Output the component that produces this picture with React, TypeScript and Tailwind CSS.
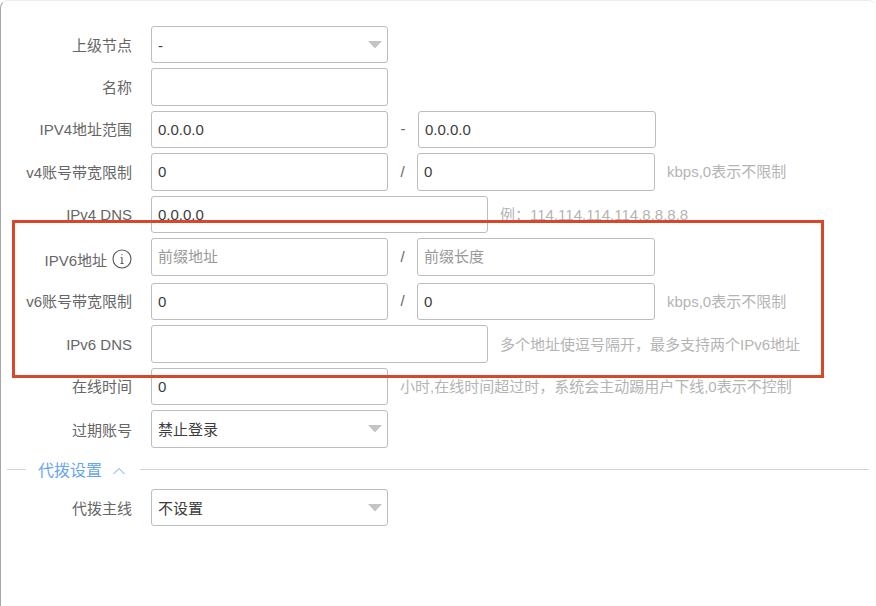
const font = "font-['Liberation_Sans','Noto_Sans_CJK_SC',sans-serif]";

function Caret() {
  return (
    <svg width="14" height="8" viewBox="0 0 14 8" className="absolute right-[5px] top-[14px]">
      <path d="M0 0h14L7 7.5z" fill="#c4c4c4" />
    </svg>
  );
}

function Field({ value, placeholder, width = 'w-[237px]', select }: { value?: string; placeholder?: string; width?: string; select?: boolean }) {
  return (
    <div className={`relative ${width} h-full flex items-center pl-[6px] ${select ? 'pt-[3px]' : 'pt-[1px]'} border border-[#bdbdbd] rounded-[3px] bg-white text-[15px]`}>
      {value ? <span className="text-[#3c3c3c]">{value}</span> : <span className="text-[#999]">{placeholder}</span>}
      {select && <Caret />}
    </div>
  );
}

function Row({ label, mt, h = 'h-[38px]', labelPt = 'pt-[2px]', children }: { label: React.ReactNode; mt: string; h?: string; labelPt?: string; children: React.ReactNode }) {
  return (
    <div className={`flex ${mt} ${h}`}>
      <div className={`w-[131px] shrink-0 flex items-center justify-end ${labelPt} text-[15px] text-[#666]`}>{label}</div>
      <div className="ml-[19px] flex items-stretch">{children}</div>
    </div>
  );
}

function Sep({ children, w = 'w-[30px]' }: { children: string; w?: string }) {
  return <div className={`${w} flex items-center justify-center text-[15px] text-[#666]`}>{children}</div>;
}

function Hint({ children, pt = 'pt-[1px]' }: { children: string; pt?: string }) {
  return <div className={`ml-[12px] flex items-center ${pt} text-[15px] text-[#b4b4b4] whitespace-nowrap`}>{children}</div>;
}

export default function App() {
  return (
    <div className={`relative w-[876px] h-[606px] overflow-hidden bg-white ${font}`}>
      <div className="w-[876px] h-[620px] border border-[#ececec] border-l-[#a8a8a8] border-r-transparent rounded-t-[8px] pt-[25px]">
        <Row label="上级节点" mt="mt-0" h="h-[37px]" labelPt="pt-[4px]">
          <Field value="-" select />
        </Row>
        <Row label="名称" mt="mt-[5px]">
          <Field />
        </Row>
        <Row label="IPV4地址范围" mt="mt-[5px]" h="h-[37px]">
          <Field value="0.0.0.0" />
          <Sep>-</Sep>
          <Field value="0.0.0.0" width="w-[238px]" />
        </Row>
        <Row label="v4账号带宽限制" mt="mt-[5px]">
          <Field value="0" />
          <Sep w="w-[29px]">/</Sep>
          <Field value="0" width="w-[238px]" />
          <Hint>kbps,0表示不限制</Hint>
        </Row>
        <Row label="IPv4 DNS" mt="mt-[5px]" h="h-[37px]">
          <Field value="0.0.0.0" width="w-[337px]" />
          <Hint>例：114.114.114.114,8.8.8.8</Hint>
        </Row>
        <Row
          mt="mt-[5px]"
          label={
            <>
              <span className="pt-[6px]">IPV6地址</span>
              <svg width="20" height="20" viewBox="0 0 20 20" fill="none" stroke="#555" strokeWidth="1.1" className="ml-[5px] mt-[2px]">
                <circle cx="10" cy="10" r="9" />
                <path d="M10 8.5v6M8.5 14.5h3M8.8 8.5H10" />
                <circle cx="10" cy="5.6" r="0.7" fill="#555" stroke="none" />
              </svg>
            </>
          }
        >
          <Field placeholder="前缀地址" />
          <Sep w="w-[29px]">/</Sep>
          <Field placeholder="前缀长度" width="w-[238px]" />
        </Row>
        <Row label="v6账号带宽限制" mt="mt-[7px]" h="h-[37px]">
          <Field value="0" />
          <Sep w="w-[29px]">/</Sep>
          <Field value="0" width="w-[238px]" />
          <Hint>kbps,0表示不限制</Hint>
        </Row>
        <Row label="IPv6 DNS" mt="mt-[5px]">
          <Field width="w-[337px]" />
          <Hint pt="pt-[3px]">多个地址使逗号隔开，最多支持两个IPv6地址</Hint>
        </Row>
        <Row label="在线时间" mt="mt-[5px]" h="h-[37px]">
          <Field value="0" />
          <Hint>小时,在线时间超过时，系统会主动踢用户下线,0表示不控制</Hint>
        </Row>
        <Row label="过期账号" mt="mt-[5px]" labelPt="pt-[4px]">
          <Field value="禁止登录" select />
        </Row>
        <div className="flex items-center mt-[12px] h-[18px] pl-[6px] w-[868px]">
          <div className="w-[19px] h-px bg-[#cdd5df]" />
          <div className="ml-[12px] pt-[3px] text-[16px] text-[#66a6f0]">代拨设置</div>
          <svg width="14" height="8" viewBox="0 0 14 8" fill="none" stroke="#66a6f0" strokeWidth="1" className="ml-[10px] mt-[3px]">
            <path d="M1.5 7L7 1.5 12.5 7" />
          </svg>
          <div className="ml-[14px] flex-1 h-px bg-[#cdd5df]" />
        </div>
        <Row label="代拨主线" mt="mt-[11px]" h="h-[37px]" labelPt="pt-[4px]">
          <Field value="不设置" select />
        </Row>
      </div>
      <div className="absolute left-[12px] top-[220px] w-[812px] h-[158px] border-[3px] border-[#d9472b]" />
    </div>
  );
}
